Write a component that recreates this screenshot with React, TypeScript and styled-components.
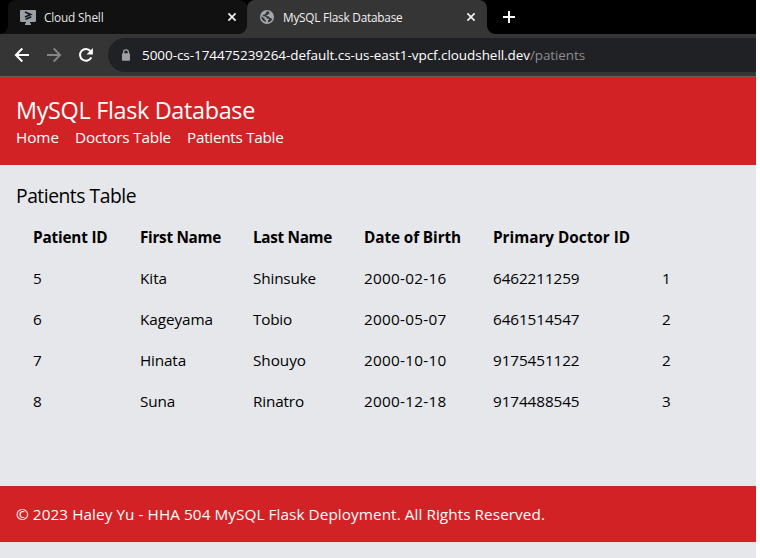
import React, { useLayoutEffect, useRef, useState } from "react";
import styled, { createGlobalStyle } from "styled-components";

const Global = createGlobalStyle`
  * { box-sizing: border-box; }
  body { margin: 0; background: #fff; overflow: hidden; }
`;

const Window = styled.div`
  width: 756px;
  height: 558px;
  display: flex;
  flex-direction: column;
  font-family: "Open Sans", "Noto Sans", sans-serif;
  background: #e5e7eb;
  overflow: hidden;
`;

const TabStrip = styled.div`
  height: 34px;
  display: flex;
  background: #000;
  padding-left: 8px;
`;

const Tab = styled.div<{ $active?: boolean }>`
  --tab: ${(p) => (p.$active ? "#353535" : "#111111")};
  position: relative;
  width: ${(p) => (p.$active ? 240 : 239)}px;
  height: 34px;
  display: flex;
  align-items: center;
  padding: 0 ${(p) => (p.$active ? 11 : 10)}px 0 12px;
  color: ${(p) => (p.$active ? "#f1f1f1" : "#e6e6e6")};
  background: var(--tab);
  border-radius: 8px 8px 0 0;

  &::before,
  &::after {
    content: "";
    position: absolute;
    bottom: 0;
    width: 8px;
    height: 8px;
  }
  &::before {
    left: -8px;
    background: radial-gradient(circle at 0 0, transparent 7.5px, var(--tab) 8px);
  }
  &::after {
    right: -8px;
    background: radial-gradient(circle at 100% 0, transparent 7.5px, var(--tab) 8px);
  }
`;

const TabTitle = styled.div`
  flex: 1;
  margin-left: 8px;
`;

const Label = styled.span<{ $size: number; $lh: number; $weight: number }>`
  display: block;
  width: max-content;
  font-size: ${(p) => p.$size}px;
  font-weight: ${(p) => p.$weight};
  line-height: ${(p) => p.$lh}px;
  white-space: nowrap;
`;

const Icon = styled.svg<{ $w?: number; $h?: number }>`
  display: block;
  flex: none;
  width: ${(p) => p.$w ?? 16}px;
  height: ${(p) => p.$h ?? 16}px;
`;

const NewTab = styled.div`
  display: flex;
  align-items: center;
  margin-left: 14px;
`;

const Toolbar = styled.div`
  height: 43px;
  display: flex;
  padding: 4px 0 4px 14px;
  background: #353535;
  border-bottom: 1px solid #606060;
`;

const Buttons = styled.div`
  display: flex;
  align-items: center;
  gap: 16px;
  width: 94px;
`;

const Address = styled.div`
  flex: 1;
  height: 34px;
  display: flex;
  align-items: center;
  padding-left: 13px;
  border-radius: 17px 0 0 17px;
  background: #202124;
  color: #fff;
`;

const Url = styled.div`
  display: flex;
  margin-left: 11px;
`;

const Path = styled.span`
  color: #8b8d91;
`;

const Header = styled.header`
  height: 88px;
  padding: 18px 16px 0;
  background: #d32225;
  color: #fff;
`;

const Nav = styled.nav`
  display: flex;
  gap: 16px;
`;

const Main = styled.main`
  height: 321px;
  padding: 17px 16px 0;
  color: #000;
`;

const Table = styled.div`
  margin-top: 6px;
`;

const Row = styled.div`
  display: grid;
  grid-template-columns: 107px 113px 111px 129px 169px 60px;
  height: 41px;
  padding-left: 17px;
  align-items: center;
`;

const Footer = styled.footer`
  height: 56px;
  padding: 16px 16px 0;
  background: #d32225;
  color: #fff;
`;

type FitProps = { text: string; width: number; size?: number; lh?: number; weight?: number };

/** A line of text whose tracking is adjusted so that it spans the given width. */
function Fit({ text, width, size = 15.3, lh = 24, weight = 400 }: FitProps) {
  const ref = useRef<HTMLSpanElement>(null);
  const [tracking, setTracking] = useState(0);
  useLayoutEffect(() => {
    const natural = ref.current!.getBoundingClientRect().width;
    setTracking((width - natural) / text.length);
  }, [text, width]);
  return (
    <Label ref={ref} $size={size} $lh={lh} $weight={weight} style={{ letterSpacing: `${tracking}px` }}>
      {text}
    </Label>
  );
}

const Close = () => (
  <Icon $w={10} $h={10} viewBox="0 0 10 10">
    <path d="M1.4 1.4 8.6 8.6M8.6 1.4 1.4 8.6" stroke="#f1f1f1" strokeWidth="1.7" />
  </Icon>
);

const headings: [string, number][] = [
  ["Patient ID", 74.5],
  ["First Name", 81],
  ["Last Name", 79],
  ["Date of Birth", 97],
  ["Primary Doctor ID", 137],
];

const patients: [string, number][][] = [
  [["5", 8.6], ["Kita", 27], ["Shinsuke", 63], ["2000-02-16", 82.5], ["6462211259", 86.5], ["1", 8.6]],
  [["6", 8.6], ["Kageyama", 73], ["Tobio", 39], ["2000-05-07", 82.5], ["6461514547", 86.5], ["2", 8.6]],
  [["7", 8.6], ["Hinata", 46], ["Shouyo", 53], ["2000-10-10", 82.5], ["9175451122", 86.5], ["2", 8.6]],
  [["8", 8.6], ["Suna", 35], ["Rinatro", 51], ["2000-12-18", 82.5], ["9174488545", 86.5], ["3", 8.6]],
];

export default function App() {
  return (
    <>
      <Global />
      <Window>
        <TabStrip>
          <Tab>
            <Icon viewBox="0 0 16 16">
              <path d="M1.2 1h13.6c.7 0 1.2.5 1.2 1.2v9.6c0 .7-.5 1.2-1.2 1.2H10v1.2h1V16H5v-1.8h1V13H1.2C.5 13 0 12.5 0 11.8V2.2C0 1.5.5 1 1.2 1z" fill="#9aa0a6" />
              <path d="m5 3 5.6 2.5L5 8M5.6 10.3 11.3 7.7" fill="none" stroke="#17191c" strokeWidth="1.7" />
            </Icon>
            <TabTitle><Fit text="Cloud Shell" width={59.5} size={11.8} /></TabTitle>
            <Close />
          </Tab>
          <Tab $active>
            <Icon viewBox="0 0 16 16">
              <circle cx="8" cy="8" r="7" fill="#a4a8ad" />
              <path d="M8.3 2.3c-1 .3-1.4 1-1.2 1.9-.9.1-1.5.6-1.5 1.5H3.7v1.6c1.5-.1 2.7.1 3.5.9.4.5.3 1.2 1 1.5l1.7.1c.4.8-.1 1.3-.9 1.5v2.1c2-.4 3.5-1.7 4.2-3.4-.6-.9-1.4-1.2-2.4-1.1-.3-1.2-1-1.7-2.2-1.7H7.5V6.1h1.3c.3-1 .9-1.3 1.7-1.5.3-1-.5-2.1-2.2-2.3z" fill="#353535" />
              <path d="M2.1 7.3c.2 3 2 5.2 4.8 5.8V11.5c-1-.3-1.4-.9-1.3-1.9z" fill="#353535" />
            </Icon>
            <TabTitle><Fit text="MySQL Flask Database" width={119.5} size={11.8} /></TabTitle>
            <Close />
          </Tab>
          <NewTab>
            <Icon viewBox="0 0 16 16">
              <path d="M8 2v12M2 8h12" stroke="#fff" strokeWidth="2" />
            </Icon>
          </NewTab>
        </TabStrip>
        <Toolbar>
          <Buttons>
            <Icon viewBox="0 0 16 16">
              <path d="M15 8H2M8.3 1.5 1.9 8l6.4 6.5" fill="none" stroke="#fff" strokeWidth="2" />
            </Icon>
            <Icon viewBox="0 0 16 16">
              <path d="M1 8h13M7.7 1.5 14.1 8l-6.4 6.5" fill="none" stroke="#858585" strokeWidth="1.8" />
            </Icon>
            <Icon viewBox="0 0 16 16">
              <path d="M13.3 10.3A5.9 5.9 0 1 1 12.5 4.1" fill="none" stroke="#fff" strokeWidth="2" />
              <path d="M14.9 1v6.4H8.5z" fill="#fff" />
            </Icon>
          </Buttons>
          <Address>
            <Icon $w={10} $h={12} viewBox="0 0 10 12">
              <path d="M2.6 5V3.3a2.4 2.4 0 0 1 4.8 0V5" fill="none" stroke="#9aa0a6" strokeWidth="1.3" />
              <rect x="1" y="4.3" width="8" height="7.4" rx=".8" fill="#9aa0a6" />
            </Icon>
            <Url>
              <Fit text="5000-cs-174475239264-default.cs-us-east1-vpcf.cloudshell.dev" width={388} size={13.5} />
              <Path><Fit text="/patients" width={55} size={13.5} /></Path>
            </Url>
          </Address>
        </Toolbar>
        <Header>
          <Fit text="MySQL Flask Database" width={239} size={23.4} lh={30} />
          <Nav>
            <Fit text="Home" width={43} />
            <Fit text="Doctors Table" width={96} />
            <Fit text="Patients Table" width={96.5} />
          </Nav>
        </Header>
        <Main>
          <Fit text="Patients Table" width={120} size={19.3} lh={28} />
          <Table>
            <Row>
              {headings.map(([text, width]) => <Fit key={text} text={text} width={width} weight={700} />)}
            </Row>
            {patients.map((row) => (
              <Row key={row[0][0]}>
                {row.map(([text, width], i) => <Fit key={i} text={text} width={width} />)}
              </Row>
            ))}
          </Table>
        </Main>
        <Footer>
          <Fit text="© 2023 Haley Yu - HHA 504 MySQL Flask Deployment. All Rights Reserved." width={529} />
        </Footer>
      </Window>
    </>
  );
}
